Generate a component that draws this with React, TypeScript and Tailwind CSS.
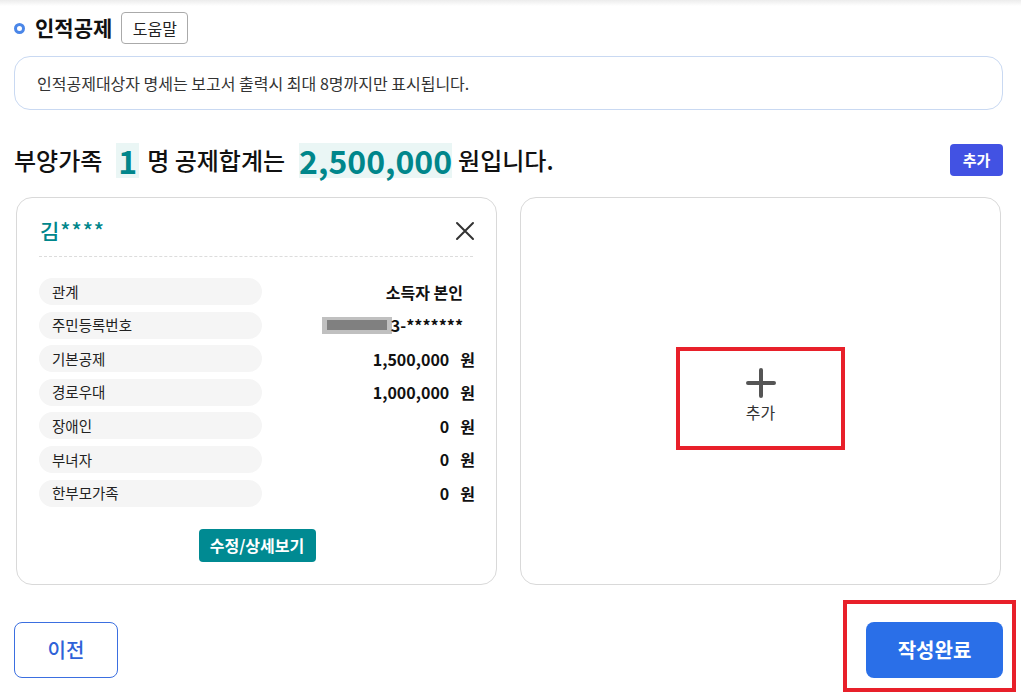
import { memo } from 'react';

const FONT = '"Noto Sans CJK KR", "Noto Sans", sans-serif';

const rows: { label: string; value: string; won?: boolean; masked?: boolean }[] = [
  { label: '관계', value: '소득자 본인' },
  { label: '주민등록번호', value: '3-*******', masked: true },
  { label: '기본공제', value: '1,500,000', won: true },
  { label: '경로우대', value: '1,000,000', won: true },
  { label: '장애인', value: '0', won: true },
  { label: '부녀자', value: '0', won: true },
  { label: '한부모가족', value: '0', won: true },
];

function CloseIcon() {
  return (
    <svg width="20" height="20" viewBox="0 0 20 20" fill="none">
      <path d="M2 2L18 18M18 2L2 18" stroke="#333" strokeWidth="2" strokeLinecap="round" />
    </svg>
  );
}

function PlusIcon() {
  return (
    <svg width="30" height="30" viewBox="0 0 30 30" fill="none">
      <path d="M15 2V28M2 15H28" stroke="#555" strokeWidth="4" strokeLinecap="round" />
    </svg>
  );
}

function PersonCard() {
  return (
    <div className="h-[388px] rounded-[16px] border border-[#d9d9d9] bg-white pl-[22px] pr-[21px]">
      <div className="mt-[21px] flex h-[24px] items-center justify-between">
        <span className="pl-[1px] text-[21px] font-medium tracking-[1px] text-[#00868b]">김****</span>
        <CloseIcon />
      </div>
      <div className="mr-[2px] mt-[13px] border-t border-dashed border-[#dcdcdc]" />
      <div className="mt-[21px] flex flex-col gap-[6.6px]">
        {rows.map((r) => (
          <div key={r.label} className="flex h-[27px] items-center">
            <div className="flex h-[27px] w-[223px] items-center rounded-full bg-[#f5f5f5] pl-[13px] text-[14.5px] text-[#222]">
              {r.label}
            </div>
            <div
              className={`flex flex-1 items-center justify-end text-[16px] font-semibold text-[#111] ${
                r.won ? '' : 'pr-[12px]'
              }`}
            >
              {r.masked && (
                <span className="mr-[-1px] flex h-[17px] w-[70px] items-center justify-center bg-[#c0c0c0]">
                  <span className="h-[10px] w-[60px] bg-[#808080]" />
                </span>
              )}
              <span>{r.value}</span>
              {r.won && <span className="ml-[11px]">원</span>}
            </div>
          </div>
        ))}
      </div>
      <div className="mt-[22px] flex justify-center">
        <button className="flex h-[33px] w-[117px] items-center justify-center rounded-[4px] bg-[#008a92] text-[16px] font-bold text-white">
          수정/상세보기
        </button>
      </div>
    </div>
  );
}

function AddCard() {
  return (
    <div className="flex h-[388px] items-center justify-center rounded-[16px] border border-[#d9d9d9] bg-white">
      <div className="mt-[14px] flex h-[103px] w-[169px] flex-col items-center justify-center border-[4px] border-[#e8202a]">
        <div className="-mt-[4px]">
          <PlusIcon />
        </div>
        <span className="mt-[2px] text-[16px] text-[#333]">추가</span>
      </div>
    </div>
  );
}

function PureApp() {
  return (
    <div className="relative min-h-[696px] w-full bg-white pl-[14px] pr-[18px]" style={{ fontFamily: FONT }}>
      <div className="pointer-events-none absolute left-0 right-0 top-0 h-[6px] bg-gradient-to-b from-[#ececec] to-white" />

      <div className="flex h-[56px] items-center pt-[12px] pb-[12px]">
        <span className="h-[11px] w-[11px] rounded-full border-[3px] border-[#4a86e8]" />
        <span className="ml-[10px] text-[21px] font-bold text-[#111]">인적공제</span>
        <button className="ml-[9px] flex h-[32px] w-[67px] items-center justify-center rounded-[4px] border border-[#aaa] text-[16px] text-[#222]">
          도움말
        </button>
      </div>

      <div className="flex h-[54px] items-center rounded-[16px] border border-[#c9d9f2] px-[22px] text-[16px] text-[#333]">
        인적공제대상자 명세는 보고서 출력시 최대 8명까지만 표시됩니다.
      </div>

      <div className="mt-[30px] flex h-[40px] items-center justify-between">
        <div className="flex items-center text-[24px] font-medium text-[#111]">
          <span>부양가족</span>
          <span className="ml-[14px] bg-[#eaf6f5] px-[2px] text-[32px] font-bold leading-[35px] text-[#00868b]">1</span>
          <span className="ml-[8px]">명 공제합계는</span>
          <span className="ml-[14px] bg-[#eaf6f5] text-[32px] font-bold leading-[35px] text-[#00868b]">2,500,000</span>
          <span className="ml-[6px]">원입니다.</span>
        </div>
        <button className="flex h-[32px] w-[53px] items-center justify-center rounded-[4px] bg-[#4252e3] text-[15px] font-bold text-white">
          추가
        </button>
      </div>

      <div className="mx-[2px] mt-[17px] grid grid-cols-2 gap-[23px]">
        <PersonCard />
        <AddCard />
      </div>

      <div className="mt-[37px] flex items-center justify-between">
        <button className="flex h-[56px] w-[104px] items-center justify-center rounded-[8px] border border-[#3b6fe0] bg-white text-[20px] font-medium text-[#2f62d8]">
          이전
        </button>
        <div className="relative">
          <button className="flex h-[56px] w-[137px] items-center justify-center rounded-[8px] bg-[#2a6fe8] text-[20px] font-bold text-white">
            작성완료
          </button>
          <div className="pointer-events-none absolute -bottom-[14px] -left-[23px] -right-[13px] -top-[22px] border-[4px] border-[#e8202a]" />
        </div>
      </div>
    </div>
  );
}

export default memo(PureApp);
